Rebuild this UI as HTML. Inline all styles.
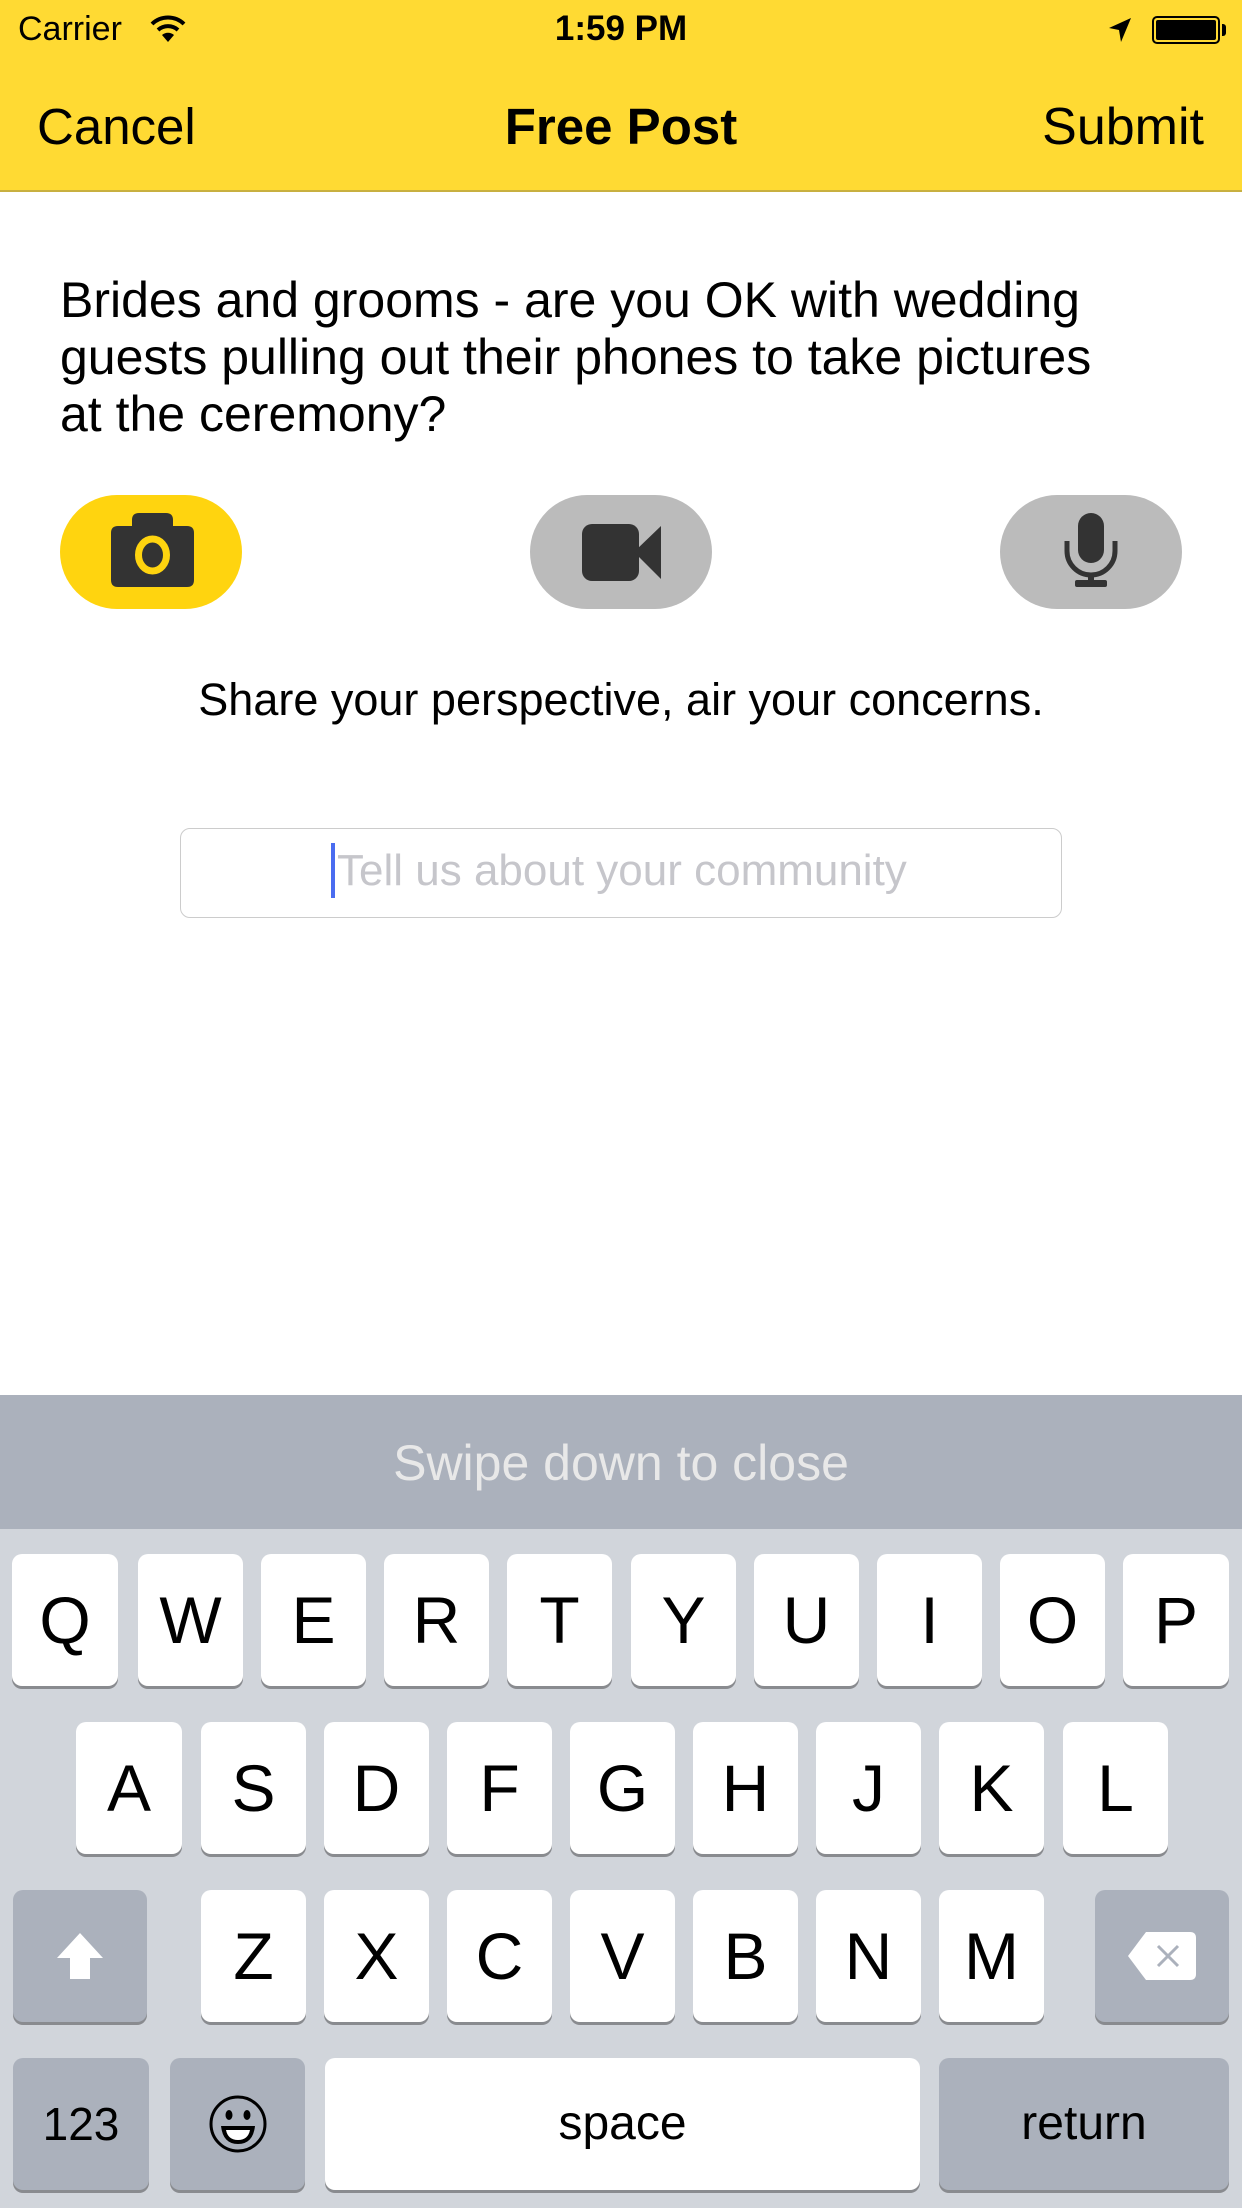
<!DOCTYPE html>
<html><head><meta charset="utf-8"><style>
*{margin:0;padding:0;box-sizing:border-box}
body{width:1242px;height:2208px;position:relative;overflow:hidden;background:#fff;font-family:"Liberation Sans",Arial,sans-serif;color:#000}
.a{position:absolute;white-space:nowrap}
.nav{position:absolute;left:0;top:0;width:1242px;height:192px;background:#FFDA33;border-bottom:2px solid #c8b040}
.pill{position:absolute;top:495px;width:182px;height:114px;border-radius:57px}
.kb{position:absolute;left:0;top:1529px;width:1242px;height:679px;background:#D1D5DB}
.k{position:absolute;height:132px;background:#fff;border-radius:10px;box-shadow:0 3px 0 #898b8f;font-size:66px;text-align:center;line-height:132px}
.g{background:#ABB1BC}
</style></head><body>
<div class="nav"></div>
<div class="a" style="left:18px;top:10px;font-size:34px">Carrier</div>
<svg class="a" style="left:150px;top:14px" width="36" height="30" viewBox="0 0 36 30"><path d="M2 10 A23 23 0 0 1 34 10" stroke="#000" stroke-width="4" fill="none"/><path d="M8 16 A15 15 0 0 1 28 16" stroke="#000" stroke-width="4" fill="none"/><path d="M18 28 L12 21 A9 9 0 0 1 24 21 Z" fill="#000"/></svg>
<div class="a" style="left:0;width:1242px;text-align:center;top:9px;font-size:35px;font-weight:bold">1:59 PM</div>
<svg class="a" style="left:1107px;top:16px" width="26" height="28" viewBox="0 0 26 28"><path d="M24 2 L2 12 L12 14 L14 26 Z" fill="#000"/></svg>
<div class="a" style="left:1152px;top:16px;width:68px;height:28px;border:2px solid #000;border-radius:5px;padding:2px"><div style="width:100%;height:100%;background:#000;border-radius:2px"></div></div>
<div class="a" style="left:1222px;top:24px;width:4px;height:12px;background:#000;border-radius:0 3px 3px 0"></div>
<div class="a" style="left:37px;top:97px;font-size:51px">Cancel</div>
<div class="a" style="left:0;width:1242px;text-align:center;top:97px;font-size:51px;font-weight:bold">Free Post</div>
<div class="a" style="right:38px;top:97px;font-size:52px">Submit</div>
<div class="a" style="left:60px;top:272px;font-size:50px;line-height:57px;white-space:normal;width:1180px">Brides and grooms - are you OK with wedding<br>guests pulling out their phones to take pictures<br>at the ceremony?</div>
<div class="pill" style="left:60px;background:#FFD40F"></div>
<div class="pill" style="left:530px;background:#BBBBBB"></div>
<div class="pill" style="left:1000px;background:#BBBBBB"></div>
<svg class="a" style="left:111px;top:513px" width="83" height="74" viewBox="0 0 83 74"><path d="M28 0 H55 Q62 0 62 7 V13 H76 Q83 13 83 20 V67 Q83 74 76 74 H7 Q0 74 0 67 V20 Q0 13 7 13 H21 V7 Q21 0 28 0Z" fill="#333"/><ellipse cx="41.5" cy="42" rx="14" ry="16" stroke="#FFD40F" stroke-width="7" fill="none"/></svg>
<svg class="a" style="left:582px;top:524px" width="80" height="57" viewBox="0 0 80 57"><rect x="0" y="0" width="57" height="57" rx="10" fill="#333"/><path d="M52 28 L79 2 V55 Z" fill="#333"/></svg>
<svg class="a" style="left:1063px;top:513px" width="56" height="74" viewBox="0 0 56 74"><rect x="15" y="0" width="26" height="50" rx="13" fill="#333"/><path d="M4 28 V38 A24 24 0 0 0 52 38 V28" stroke="#333" stroke-width="5" fill="none"/><rect x="25" y="60" width="6" height="10" fill="#333"/><rect x="12" y="67" width="32" height="7" rx="2" fill="#333"/></svg>
<div class="a" style="left:0;width:1242px;text-align:center;top:674px;font-size:45px">Share your perspective, air your concerns.</div>
<div class="a" style="left:180px;top:828px;width:882px;height:90px;border:1.5px solid #ccc;border-radius:10px"></div>
<div class="a" style="left:331px;top:843px;width:4px;height:55px;background:#4a6cf0"></div>
<div class="a" style="left:337px;top:846px;font-size:44px;color:#c6c6cb">Tell us about your community</div>
<div class="a" style="left:0;top:1395px;width:1242px;height:134px;background:#ABB1BC"></div>
<div class="a" style="left:0;width:1242px;text-align:center;top:1434px;font-size:50px;color:#e8e8e8">Swipe down to close</div>
<div class="kb"></div>
<div class="k" style="left:12px;top:1554px;width:106px">Q</div>
<div class="k" style="left:138px;top:1554px;width:105px">W</div>
<div class="k" style="left:261px;top:1554px;width:105px">E</div>
<div class="k" style="left:384px;top:1554px;width:105px">R</div>
<div class="k" style="left:507px;top:1554px;width:105px">T</div>
<div class="k" style="left:631px;top:1554px;width:105px">Y</div>
<div class="k" style="left:754px;top:1554px;width:105px">U</div>
<div class="k" style="left:877px;top:1554px;width:105px">I</div>
<div class="k" style="left:1000px;top:1554px;width:105px">O</div>
<div class="k" style="left:1123px;top:1554px;width:106px">P</div>
<div class="k" style="left:76px;top:1722px;width:106px">A</div>
<div class="k" style="left:201px;top:1722px;width:105px">S</div>
<div class="k" style="left:324px;top:1722px;width:105px">D</div>
<div class="k" style="left:447px;top:1722px;width:105px">F</div>
<div class="k" style="left:570px;top:1722px;width:105px">G</div>
<div class="k" style="left:693px;top:1722px;width:105px">H</div>
<div class="k" style="left:816px;top:1722px;width:105px">J</div>
<div class="k" style="left:939px;top:1722px;width:105px">K</div>
<div class="k" style="left:1063px;top:1722px;width:105px">L</div>
<div class="k g" style="left:13px;top:1890px;width:134px"><svg width="50" height="50" viewBox="0 0 50 50" style="margin-top:41px"><path d="M25 2 L48 27 H35 V48 H15 V27 H2 Z" fill="#fff"/></svg></div>
<div class="k" style="left:201px;top:1890px;width:105px">Z</div>
<div class="k" style="left:324px;top:1890px;width:105px">X</div>
<div class="k" style="left:447px;top:1890px;width:105px">C</div>
<div class="k" style="left:570px;top:1890px;width:105px">V</div>
<div class="k" style="left:693px;top:1890px;width:105px">B</div>
<div class="k" style="left:816px;top:1890px;width:105px">N</div>
<div class="k" style="left:939px;top:1890px;width:105px">M</div>
<div class="k g" style="left:1095px;top:1890px;width:134px"><svg width="68" height="48" viewBox="0 0 68 48" style="margin-top:42px"><path d="M18 0 H62 Q68 0 68 6 V42 Q68 48 62 48 H18 L0 24 Z" fill="#fff"/><path d="M30 14 L50 34 M50 14 L30 34" stroke="#ABB1BC" stroke-width="3"/></svg></div>
<div class="k g" style="left:13px;top:2058px;width:136px;font-size:46px">123</div>
<div class="k g" style="left:170px;top:2058px;width:135px"><svg width="60" height="60" viewBox="0 0 60 60" style="margin-top:36px"><circle cx="30" cy="30" r="27" stroke="#000" stroke-width="3" fill="none"/><ellipse cx="21" cy="21" rx="3.5" ry="5"/><ellipse cx="39" cy="21" rx="3.5" ry="5"/><path d="M13 32 H47 Q45 50 30 50 Q15 50 13 32Z" fill="#000"/><path d="M18 36 H42 Q40 46 30 46 Q20 46 18 36Z" fill="#fff"/></svg></div>
<div class="k" style="left:325px;top:2058px;width:595px;font-size:48px">space</div>
<div class="k g" style="left:939px;top:2058px;width:290px;font-size:48px">return</div>
</body></html>
